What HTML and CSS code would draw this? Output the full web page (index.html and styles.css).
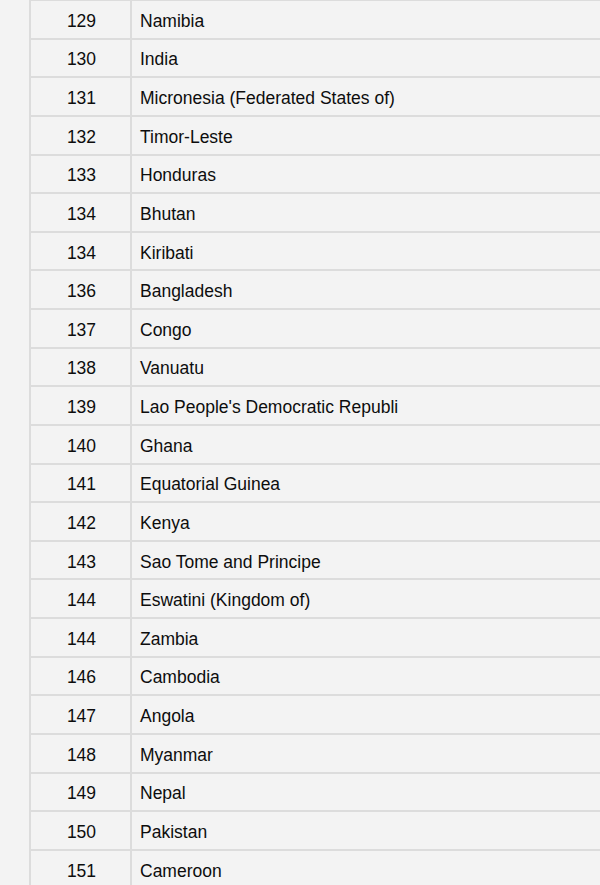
FILE: index.html
```html
<!DOCTYPE html>
<html lang="en">
<head>
    <meta charset="UTF-8">
    <meta name="viewport" content="width=device-width, initial-scale=1.0">
    <title>Ranking</title>
    <link rel="stylesheet" href="styles.css">
</head>
<body>
    <div class="rank-table">
        <div class="row"><div class="rank">129</div><div class="country">Namibia</div></div>
        <div class="row"><div class="rank">130</div><div class="country">India</div></div>
        <div class="row"><div class="rank">131</div><div class="country">Micronesia (Federated States of)</div></div>
        <div class="row"><div class="rank">132</div><div class="country">Timor-Leste</div></div>
        <div class="row"><div class="rank">133</div><div class="country">Honduras</div></div>
        <div class="row"><div class="rank">134</div><div class="country">Bhutan</div></div>
        <div class="row"><div class="rank">134</div><div class="country">Kiribati</div></div>
        <div class="row"><div class="rank">136</div><div class="country">Bangladesh</div></div>
        <div class="row"><div class="rank">137</div><div class="country">Congo</div></div>
        <div class="row"><div class="rank">138</div><div class="country">Vanuatu</div></div>
        <div class="row"><div class="rank">139</div><div class="country">Lao People's Democratic Republi</div></div>
        <div class="row"><div class="rank">140</div><div class="country">Ghana</div></div>
        <div class="row"><div class="rank">141</div><div class="country">Equatorial Guinea</div></div>
        <div class="row"><div class="rank">142</div><div class="country">Kenya</div></div>
        <div class="row"><div class="rank">143</div><div class="country">Sao Tome and Principe</div></div>
        <div class="row"><div class="rank">144</div><div class="country">Eswatini (Kingdom of)</div></div>
        <div class="row"><div class="rank">144</div><div class="country">Zambia</div></div>
        <div class="row"><div class="rank">146</div><div class="country">Cambodia</div></div>
        <div class="row"><div class="rank">147</div><div class="country">Angola</div></div>
        <div class="row"><div class="rank">148</div><div class="country">Myanmar</div></div>
        <div class="row"><div class="rank">149</div><div class="country">Nepal</div></div>
        <div class="row"><div class="rank">150</div><div class="country">Pakistan</div></div>
        <div class="row"><div class="rank">151</div><div class="country">Cameroon</div></div>
    </div>
</body>
</html>
```
FILE: styles.css
```css
html, body {
    margin: 0;
    padding: 0;
    background: #f3f3f3;
    overflow: hidden;
}
body {
    font-family: "Liberation Sans", Arial, sans-serif;
    font-size: 17.5px;
    color: #0d0d0d;
}
.rank-table {
    display: flex;
    flex-direction: column;
    margin-top: -1px;
    margin-left: 29px;
    border-left: 2px solid #dcdcdc;
}
.row {
    display: flex;
    align-items: center;
    box-sizing: border-box;
    height: 38.64px;
    padding-top: 4px;
    border-top: 2px solid #dcdcdc;
}
.rank {
    width: 97px;
    text-align: center;
    align-self: stretch;
    display: flex;
    align-items: center;
    justify-content: center;
    margin-top: -4px;
    padding-top: 4px;
    padding-left: 2px;
    border-right: 2px solid #dcdcdc;
}
.country {
    padding-left: 8px;
    white-space: nowrap;
}
```
